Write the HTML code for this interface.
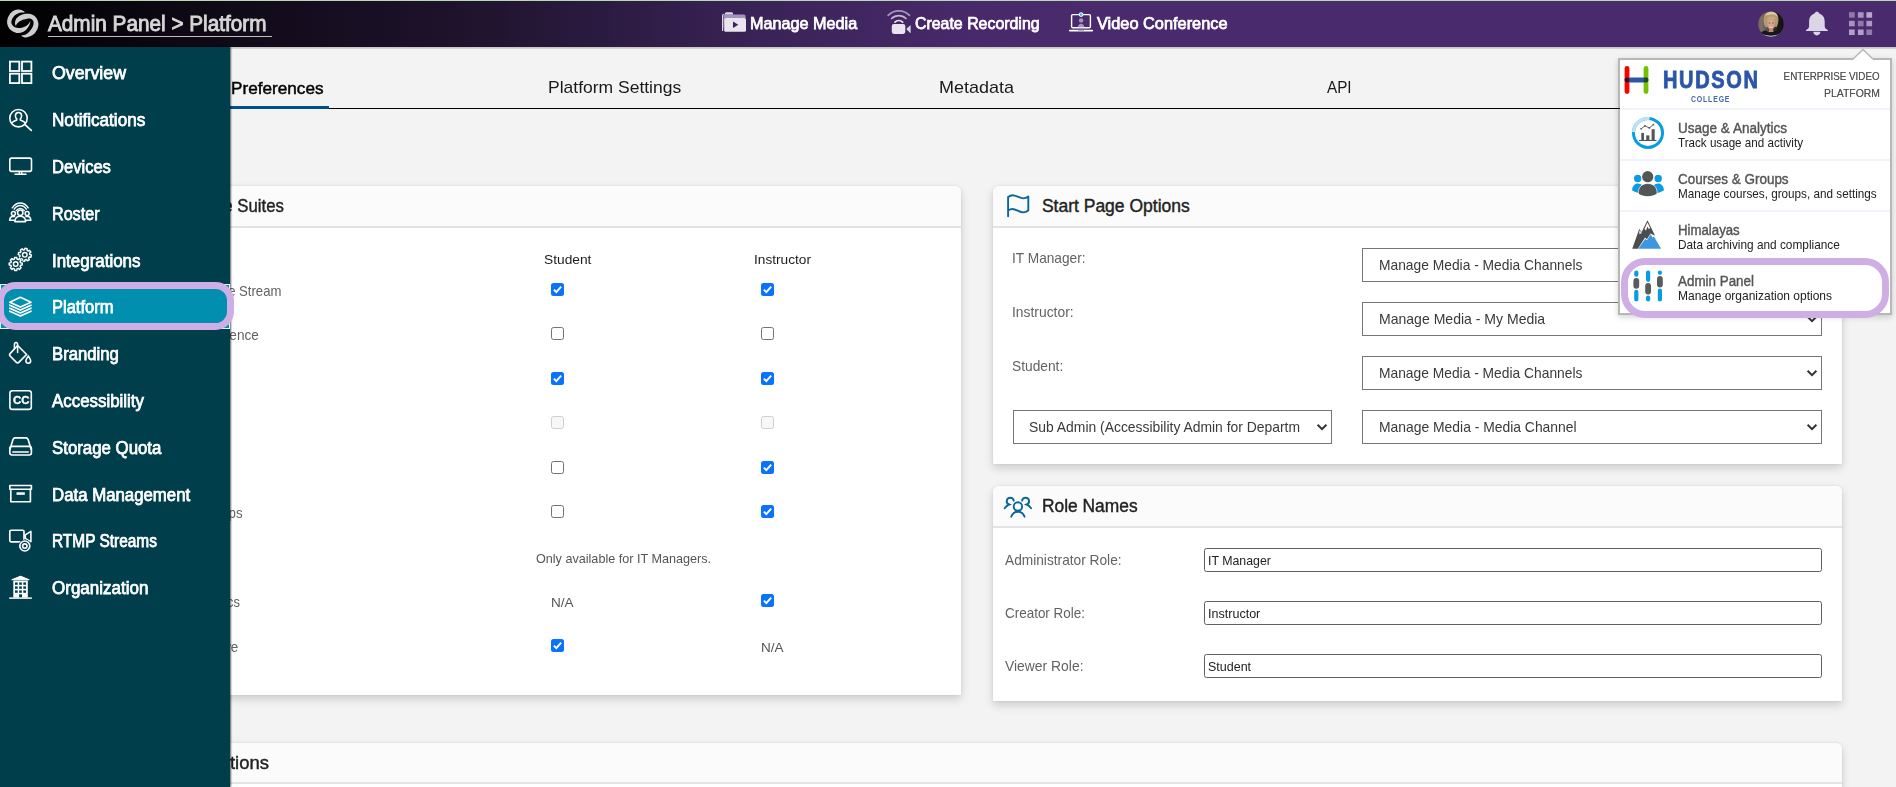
<!DOCTYPE html>
<html lang="en"><head><meta charset="utf-8"><title>Admin Panel - Platform</title>
<style>
*{box-sizing:border-box;margin:0;padding:0}
html,body{width:1896px;height:787px;overflow:hidden;background:#f3f3f3;font-family:"Liberation Sans",sans-serif}
body{position:relative}
.abs{position:absolute}
.t{position:absolute;white-space:pre;line-height:1;font-family:"Liberation Sans",sans-serif}
#topline{left:0;top:0;width:1896px;height:1px;background:#b9d8b4}
#hdr{left:0;top:1px;width:1896px;height:46px;background:linear-gradient(90deg,#000 0,#0a060f 130px,#1f132d 470px,#3a2357 760px,#482a6b 980px,#492b6d 1100px)}
#side{left:0;top:47px;width:230px;height:740px;background:#003e4c;box-shadow:1px 0 1.6px rgba(0,0,0,.6)}
.card{position:absolute;background:#fff;border-radius:6px 6px 1px 1px;box-shadow:0 4px 10px rgba(0,0,0,.16),0 0 3px rgba(0,0,0,.08)}
.card .hd{position:absolute;left:0;top:0;right:0;height:42px;background:#fbfbfb;border-bottom:2px solid #e3e3e3;border-radius:6px 6px 0 0}
.sel{position:absolute;height:34px;background:#fff;border:1px solid #767676;border-radius:0}
.inp{position:absolute;height:24px;background:#fff;border:1px solid #606060;border-radius:2.5px}
.cb{position:absolute;width:13px;height:13px;border-radius:2.5px}
.cb.on{background:#0a72fb}
.cb.off{background:#fff;border:1px solid #727272}
.cb.dis{background:#f7f7f7;border:1px solid #cfcfcf}
.cb svg{position:absolute;left:0;top:0}

</style></head>
<body>
<span class="t" style="left:230.80px;top:79.60px;font-size:17px;font-weight:400;color:#000;transform:scaleX(1.0101);transform-origin:left center;-webkit-text-stroke:.45px #000;">Preferences</span>
<span class="t" style="left:548.00px;top:79.40px;font-size:17px;font-weight:400;color:#1a1a1a;transform:scaleX(1.0289);transform-origin:left center;">Platform Settings</span>
<span class="t" style="left:939.30px;top:79.40px;font-size:17px;font-weight:400;color:#1a1a1a;transform:scaleX(1.0580);transform-origin:left center;">Metadata</span>
<span class="t" style="left:1326.60px;top:79.40px;font-size:17px;font-weight:400;color:#1a1a1a;transform:scaleX(0.8976);transform-origin:left center;">API</span>
<div class="abs" style="left:329px;top:108px;width:1300px;height:1px;background:#000"></div>
<div class="abs" style="left:200px;top:106px;width:129px;height:3px;background:#00518a"></div>
<div class="card" style="left:150px;top:186px;width:811px;height:509px"><div class="hd"></div></div>
<span class="t" style="left:169.69px;top:198.25px;font-size:17.5px;font-weight:400;color:#222;transform:scaleX(0.9560);transform-origin:right center;-webkit-text-stroke:.4px #222;">Feature Suites</span>
<span class="t" style="left:543.60px;top:253.31px;font-size:13.5px;font-weight:400;color:#1c1c1c;transform:scaleX(1.0183);transform-origin:left center;">Student</span>
<span class="t" style="left:754.00px;top:253.31px;font-size:13.5px;font-weight:400;color:#1c1c1c;transform:scaleX(1.0128);transform-origin:left center;">Instructor</span>
<span class="t" style="left:203.93px;top:284.12px;font-size:14.5px;font-weight:400;color:#636363;transform:scaleX(0.9048);transform-origin:right center;">Live Stream</span>
<span class="t" style="left:143.47px;top:328.42px;font-size:14.5px;font-weight:400;color:#636363;transform:scaleX(0.9379);transform-origin:right center;">Video Conference</span>
<span class="t" style="left:194.74px;top:506.42px;font-size:14.5px;font-weight:400;color:#636363;transform:scaleX(0.9134);transform-origin:right center;">Groups</span>
<span class="t" style="left:182.27px;top:595.42px;font-size:14.5px;font-weight:400;color:#636363;transform:scaleX(0.8966);transform-origin:right center;">Analytics</span>
<span class="t" style="left:189.64px;top:640.12px;font-size:14.5px;font-weight:400;color:#636363;transform:scaleX(0.9284);transform-origin:right center;">Archive</span>
<div class="cb on" style="left:551px;top:283px"><svg width="13" height="13" viewBox="0 0 13 13"><path d="M2.9 6.7 5.3 9.2 10.2 3.6" fill="none" stroke="#fff" stroke-width="1.9" stroke-linecap="butt" stroke-linejoin="miter"/></svg></div>
<div class="cb on" style="left:761px;top:283px"><svg width="13" height="13" viewBox="0 0 13 13"><path d="M2.9 6.7 5.3 9.2 10.2 3.6" fill="none" stroke="#fff" stroke-width="1.9" stroke-linecap="butt" stroke-linejoin="miter"/></svg></div>
<div class="cb off" style="left:551px;top:327px"></div>
<div class="cb off" style="left:761px;top:327px"></div>
<div class="cb on" style="left:551px;top:372px"><svg width="13" height="13" viewBox="0 0 13 13"><path d="M2.9 6.7 5.3 9.2 10.2 3.6" fill="none" stroke="#fff" stroke-width="1.9" stroke-linecap="butt" stroke-linejoin="miter"/></svg></div>
<div class="cb on" style="left:761px;top:372px"><svg width="13" height="13" viewBox="0 0 13 13"><path d="M2.9 6.7 5.3 9.2 10.2 3.6" fill="none" stroke="#fff" stroke-width="1.9" stroke-linecap="butt" stroke-linejoin="miter"/></svg></div>
<div class="cb dis" style="left:551px;top:416px"></div>
<div class="cb dis" style="left:761px;top:416px"></div>
<div class="cb off" style="left:551px;top:461px"></div>
<div class="cb on" style="left:761px;top:461px"><svg width="13" height="13" viewBox="0 0 13 13"><path d="M2.9 6.7 5.3 9.2 10.2 3.6" fill="none" stroke="#fff" stroke-width="1.9" stroke-linecap="butt" stroke-linejoin="miter"/></svg></div>
<div class="cb off" style="left:551px;top:505px"></div>
<div class="cb on" style="left:761px;top:505px"><svg width="13" height="13" viewBox="0 0 13 13"><path d="M2.9 6.7 5.3 9.2 10.2 3.6" fill="none" stroke="#fff" stroke-width="1.9" stroke-linecap="butt" stroke-linejoin="miter"/></svg></div>
<span class="t" style="left:535.70px;top:552.25px;font-size:13px;font-weight:400;color:#555;transform:scaleX(0.9700);transform-origin:left center;">Only available for IT Managers.</span>
<span class="t" style="left:551.00px;top:596.25px;font-size:13px;font-weight:400;color:#555;transform:scaleX(1.0428);transform-origin:left center;">N/A</span>
<div class="cb on" style="left:761px;top:594px"><svg width="13" height="13" viewBox="0 0 13 13"><path d="M2.9 6.7 5.3 9.2 10.2 3.6" fill="none" stroke="#fff" stroke-width="1.9" stroke-linecap="butt" stroke-linejoin="miter"/></svg></div>
<div class="cb on" style="left:551px;top:639px"><svg width="13" height="13" viewBox="0 0 13 13"><path d="M2.9 6.7 5.3 9.2 10.2 3.6" fill="none" stroke="#fff" stroke-width="1.9" stroke-linecap="butt" stroke-linejoin="miter"/></svg></div>
<span class="t" style="left:761.00px;top:641.05px;font-size:13px;font-weight:400;color:#555;transform:scaleX(1.0428);transform-origin:left center;">N/A</span>
<div class="card" style="left:150px;top:743px;width:1692px;height:120px"><div class="hd" style="height:41px"></div></div>
<span class="t" style="left:124.35px;top:755.25px;font-size:17.5px;font-weight:400;color:#222;transform:scaleX(1.0549);transform-origin:right center;-webkit-text-stroke:.4px #222;">Recording Options</span>
<div class="card" style="left:993px;top:186px;width:849px;height:278px"><div class="hd"></div></div>
<svg class="abs" style="left:1000px;top:190px" width="36" height="32" viewBox="1000 190 36 32"><path d="M1008.100 216.300V196.900c1.500-1.100 2.900-1.700 4.400-1.700 3.600 0 7 3.200 11 3.200 1.800 0 3.300-.7 4.800-1.900v14c-1.500 1.200-3 1.900-4.800 1.900-4 0-7.400-3.400-11-3.400-1.500 0-2.900.5-4.400 1.500" fill="none" stroke="#0b6795" stroke-width="1.900" stroke-linecap="round" stroke-linejoin="round"/></svg>
<span class="t" style="left:1041.90px;top:198.25px;font-size:17.5px;font-weight:400;color:#222;-webkit-text-stroke:.4px #222;">Start Page Options</span>
<span class="t" style="left:1012.00px;top:251.22px;font-size:14.5px;font-weight:400;color:#636363;transform:scaleX(0.9445);transform-origin:left center;">IT Manager:</span>
<span class="t" style="left:1012.00px;top:304.82px;font-size:14.5px;font-weight:400;color:#636363;transform:scaleX(0.9555);transform-origin:left center;">Instructor:</span>
<span class="t" style="left:1012.00px;top:358.62px;font-size:14.5px;font-weight:400;color:#636363;transform:scaleX(0.9479);transform-origin:left center;">Student:</span>
<div class="sel" style="left:1362px;top:248px;width:460px"><svg class="abs" style="right:3px;top:10px" width="12" height="12" viewBox="0 0 12 12"><path d="M1.6 3.7 6 8.1 10.4 3.7" fill="none" stroke="#333" stroke-width="2"/></svg></div>
<div class="sel" style="left:1362px;top:302px;width:460px"><svg class="abs" style="right:3px;top:10px" width="12" height="12" viewBox="0 0 12 12"><path d="M1.6 3.7 6 8.1 10.4 3.7" fill="none" stroke="#333" stroke-width="2"/></svg></div>
<div class="sel" style="left:1362px;top:356px;width:460px"><svg class="abs" style="right:3px;top:10px" width="12" height="12" viewBox="0 0 12 12"><path d="M1.6 3.7 6 8.1 10.4 3.7" fill="none" stroke="#333" stroke-width="2"/></svg></div>
<div class="sel" style="left:1362px;top:410px;width:460px"><svg class="abs" style="right:3px;top:10px" width="12" height="12" viewBox="0 0 12 12"><path d="M1.6 3.7 6 8.1 10.4 3.7" fill="none" stroke="#333" stroke-width="2"/></svg></div>
<div class="sel" style="left:1013px;top:410px;width:319px"><svg class="abs" style="right:3px;top:10px" width="12" height="12" viewBox="0 0 12 12"><path d="M1.6 3.7 6 8.1 10.4 3.7" fill="none" stroke="#333" stroke-width="2"/></svg></div>
<span class="t" style="left:1379.00px;top:258.12px;font-size:14.5px;font-weight:400;color:#3a3a3a;transform:scaleX(0.9523);transform-origin:left center;">Manage Media - Media Channels</span>
<span class="t" style="left:1379.00px;top:312.12px;font-size:14.5px;font-weight:400;color:#3a3a3a;transform:scaleX(0.9681);transform-origin:left center;">Manage Media - My Media</span>
<span class="t" style="left:1379.00px;top:366.12px;font-size:14.5px;font-weight:400;color:#3a3a3a;transform:scaleX(0.9523);transform-origin:left center;">Manage Media - Media Channels</span>
<span class="t" style="left:1379.00px;top:420.12px;font-size:14.5px;font-weight:400;color:#3a3a3a;transform:scaleX(0.9576);transform-origin:left center;">Manage Media - Media Channel</span>
<span class="t" style="left:1029.40px;top:420.12px;font-size:14.5px;font-weight:400;color:#3a3a3a;transform:scaleX(0.9581);transform-origin:left center;">Sub Admin (Accessibility Admin for Departm</span>
<div class="card" style="left:993px;top:486px;width:849px;height:215px"><div class="hd"></div></div>
<svg class="abs" style="left:1000px;top:492px" width="36" height="30" viewBox="1000 492 36 30"><g fill="none" stroke="#0b6795" stroke-width="1.900" stroke-linecap="round"><circle cx="1017.900" cy="506.500" r="4.200"/><path d="M1011.200 516.700c1.200-3.400 3.500-5 6.700-5s5.500 1.600 6.700 5"/><path d="M1013.700 500.700a3.500 3.500 0 1 0-4.600 3.800c-1.700.6-3.100 1.900-4.400 3.800"/><path d="M1022.100 500.700a3.500 3.500 0 1 1 4.600 3.800c1.700.6 3.100 1.900 4.400 3.800"/></g></svg>
<span class="t" style="left:1041.90px;top:498.25px;font-size:17.5px;font-weight:400;color:#222;transform:scaleX(0.9928);transform-origin:left center;-webkit-text-stroke:.4px #222;">Role Names</span>
<span class="t" style="left:1005.20px;top:552.62px;font-size:14.5px;font-weight:400;color:#636363;transform:scaleX(0.9457);transform-origin:left center;">Administrator Role:</span>
<span class="t" style="left:1005.20px;top:605.62px;font-size:14.5px;font-weight:400;color:#636363;transform:scaleX(0.9277);transform-origin:left center;">Creator Role:</span>
<span class="t" style="left:1005.20px;top:658.62px;font-size:14.5px;font-weight:400;color:#636363;transform:scaleX(0.9579);transform-origin:left center;">Viewer Role:</span>
<div class="inp" style="left:1204px;top:548px;width:618px"></div>
<div class="inp" style="left:1204px;top:601px;width:618px"></div>
<div class="inp" style="left:1204px;top:654px;width:618px"></div>
<span class="t" style="left:1208.40px;top:553.85px;font-size:13px;font-weight:400;color:#222;transform:scaleX(0.9494);transform-origin:left center;">IT Manager</span>
<span class="t" style="left:1208.40px;top:606.85px;font-size:13px;font-weight:400;color:#222;transform:scaleX(0.9652);transform-origin:left center;">Instructor</span>
<span class="t" style="left:1208.40px;top:659.85px;font-size:13px;font-weight:400;color:#222;transform:scaleX(0.9614);transform-origin:left center;">Student</span>
<div id="hdr" class="abs"></div>
<div id="topline" class="abs"></div>
<div class="abs" style="left:230px;top:47px;width:1666px;height:2px;background:linear-gradient(#c4c4c0,#d6d6d3)"></div>
<svg class="abs" style="left:0;top:0" width="48" height="47" viewBox="0 0 48 47"><path d="M24.86 12.22C24.81 11.80 22.58 10.55 21.51 10.10C20.44 9.65 19.69 9.50 18.44 9.54C17.18 9.59 15.36 9.68 13.97 10.38C12.57 11.08 11.13 12.34 10.06 13.73C8.99 15.13 8.03 17.13 7.54 18.76C7.06 20.39 6.92 21.97 7.15 23.51C7.38 25.04 7.99 26.66 8.94 27.98C9.89 29.30 11.36 30.60 12.85 31.44C14.34 32.28 16.20 32.91 17.88 33.01C19.55 33.10 21.42 32.68 22.91 32.00C24.39 31.32 25.73 30.11 26.82 28.93C27.91 27.74 28.85 26.20 29.44 24.91C30.03 23.61 30.54 21.26 30.34 21.16C30.13 21.07 29.17 23.40 28.21 24.35C27.25 25.30 25.84 26.25 24.58 26.86C23.32 27.47 21.97 27.88 20.67 28.03C19.37 28.19 17.97 28.13 16.76 27.81C15.55 27.49 14.29 26.88 13.41 26.13C12.52 25.39 11.73 24.38 11.45 23.34C11.17 22.30 11.31 21.06 11.73 19.88C12.15 18.69 12.94 17.29 13.97 16.25C14.99 15.20 16.57 14.23 17.88 13.62C19.18 13.01 20.62 12.85 21.79 12.61C22.95 12.38 24.91 12.64 24.86 12.22Z" fill="#cecece"/><path d="M15.81 25.74C15.51 25.51 14.91 23.83 14.97 22.67C15.04 21.51 15.44 19.92 16.20 18.76C16.96 17.60 18.25 16.48 19.55 15.69C20.86 14.90 22.44 14.32 24.02 14.01C25.61 13.70 27.47 13.64 29.05 13.84C30.63 14.05 32.22 14.42 33.52 15.24C34.82 16.06 36.05 17.34 36.87 18.76C37.69 20.18 38.32 22.11 38.44 23.79C38.55 25.46 38.16 27.23 37.54 28.82C36.93 30.40 35.98 32.03 34.75 33.28C33.52 34.54 31.58 35.64 30.17 36.36C28.75 37.07 27.37 37.47 26.26 37.59C25.14 37.70 24.27 37.37 23.46 37.03C22.65 36.68 21.12 35.91 21.40 35.52C21.68 35.13 23.91 35.24 25.14 34.68C26.37 34.12 27.70 33.15 28.77 32.17C29.84 31.19 30.80 30.03 31.56 28.82C32.33 27.61 33.05 26.16 33.35 24.91C33.65 23.65 33.70 22.25 33.35 21.27C33.01 20.30 32.28 19.48 31.28 19.04C30.29 18.60 28.77 18.53 27.37 18.65C25.98 18.77 24.30 19.23 22.91 19.77C21.51 20.30 20.02 21.12 18.99 21.83C17.97 22.55 17.29 23.42 16.76 24.07C16.23 24.72 16.11 25.98 15.81 25.74Z" fill="#cecece"/></svg>
<span class="t" style="left:47.80px;top:13.80px;font-size:21.5px;font-weight:400;color:#d6d6d6;transform:scaleX(0.9648);transform-origin:left center;-webkit-text-stroke:.9px #d6d6d6;">Admin Panel &gt; Platform</span>
<div class="abs" style="left:48px;top:36px;width:224px;height:1px;background:#bdbdbd"></div>
<span class="t" style="left:749.90px;top:15.34px;font-size:16.5px;font-weight:400;color:#fff;transform:scaleX(0.9821);transform-origin:left center;-webkit-text-stroke:.75px #fff;">Manage Media</span>
<span class="t" style="left:915.00px;top:15.34px;font-size:16.5px;font-weight:400;color:#fff;transform:scaleX(0.9634);transform-origin:left center;-webkit-text-stroke:.75px #fff;">Create Recording</span>
<span class="t" style="left:1096.60px;top:15.34px;font-size:16.5px;font-weight:400;color:#fff;transform:scaleX(0.9902);transform-origin:left center;-webkit-text-stroke:.75px #fff;">Video Conference</span>
<svg class="abs" style="left:716px;top:6px" width="36" height="32" viewBox="716 6 36 32"><path d="M722.600 31V15.600c0-.9.500-1.400 1.300-1.400" fill="none" stroke="#e4deeb" stroke-width="1.100"/><path d="M723.500 30.500V15.500c0-.7.400-1.100 1.100-1.100h19.200c.8 0 1.300.4 1.500 1.100l.6 2.500H725z" fill="#a493bc"/><path d="M724.700 14.400c0-1.400.6-2.200 1.800-2.200h5.200c.9 0 1.400.8 1.400 2.200z" fill="#e0d9e8"/><rect x="724.200" y="18" width="21.800" height="13.800" rx="1.600" fill="#e9e4ee"/><path d="M733 21.600v6.300l5.300-3.150z" fill="#3b2259"/></svg>
<svg class="abs" style="left:884px;top:6px" width="32" height="32" viewBox="884 6 32 32"><g fill="none" stroke-linecap="round"><path d="M888.100 15.300C894 9.300 903.600 9.300 909.500 15.300" stroke="#a695be" stroke-width="1.700"/><path d="M891.600 18.500c4-3.900 10.400-3.900 14.400 0" stroke="#c3b6d5" stroke-width="1.700"/><path d="M895 22.100c2.200-2 5.400-2 7.600 0" stroke="#ece7f1" stroke-width="1.800"/></g><rect x="891.800" y="24" width="13.500" height="9.900" rx="2.100" fill="#e9e4ee"/><path d="M906.300 29.100 910.200 25.200c.2-.2.400-.1.400.2v7.400c0 .3-.2.400-.4.200z" fill="#ddd5e6"/></svg>
<svg class="abs" style="left:1064px;top:8px" width="34" height="28" viewBox="1064 8 34 28"><rect x="1071.600" y="14.600" width="18.800" height="13.200" rx="1.200" fill="none" stroke="#fff" stroke-width="1.400"/><rect x="1068.900" y="29.700" width="24.200" height="1.800" rx=".9" fill="#fff"/><rect x="1078" y="29.700" width="6" height=".8" fill="#7c6a97"/><circle cx="1081.100" cy="20.400" r="2.200" fill="#a797bc"/><path d="M1077.800 27.200c.3-2.300 1.500-3.500 3.300-3.500s3 1.200 3.300 3.500z" fill="#a797bc"/><circle cx="1081.100" cy="14.600" r="2.300" fill="#fff"/><circle cx="1081.100" cy="14.600" r="1.400" fill="#45b4ff"/></svg>
<svg class="abs" style="left:1756px;top:9px" width="30" height="30" viewBox="1756 9 30 30"><defs><clipPath id="av"><circle cx="1770.900" cy="24" r="12.700"/></clipPath><filter id="avbl" x="-10%" y="-10%" width="120%" height="120%"><feGaussianBlur stdDeviation=".55"/></filter><linearGradient id="avb" x1="0" x2="1"><stop offset="0" stop-color="#5d5550"/><stop offset=".22" stop-color="#7d7167"/><stop offset=".4" stop-color="#5a4e48"/><stop offset=".72" stop-color="#1a1615"/><stop offset="1" stop-color="#0b0909"/></linearGradient><radialGradient id="avf" cx=".5" cy=".42" r=".62"><stop offset="0" stop-color="#e0b69e"/><stop offset=".7" stop-color="#cc9a82"/><stop offset="1" stop-color="#9c6e5a"/></radialGradient></defs><g clip-path="url(#av)"><g filter="url(#avbl)"><rect x="1754" y="7" width="34" height="34" fill="url(#avb)"/><path d="M1763.800 22.500c-1.200-6 1.800-10.600 6.800-10.900 5.200-.3 8.500 3.600 7.800 9.400-.3 2.300-.8 4-1.600 5.800l-11.300.400c-.9-1.600-1.400-3-1.700-4.700z" fill="#b39a72"/><path d="M1764.600 16c1.800-3.200 4.600-4.500 7.400-4.200 2.700.3 4.800 1.900 5.600 4.600-1.900-1.400-3.700-1.900-6-1.800-2.600.1-4.800.5-7 1.400z" fill="#dcc9a2"/><ellipse cx="1771.100" cy="23.800" rx="4.400" ry="5.900" fill="url(#avf)"/><path d="M1766.300 21c.6-3.200 2.600-4.800 5-4.800 2.500 0 4.300 1.500 4.800 4.300-1.500-1.500-3-2-4.800-2-1.900 0-3.400.8-5 2.500z" fill="#c4aa7c"/><path d="M1768.900 23h1.500M1772 23h1.500" stroke="#4e382f" stroke-width=".8"/><path d="M1769.300 26.800c1 .8 2.600.8 3.600 0" stroke="#f3e6df" stroke-width=".9" fill="none"/><path d="M1769.300 29h3.600l.6 3h-4.800z" fill="#b98a74"/><path d="M1758 39c.5-5.500 3.800-7.800 8-8.500l2.500 1.800h4.800l2.500-1.800c4.200.7 7.500 3 8 8.500z" fill="#15151a"/><path d="M1760 33.800c3.200 1.700 6.800 2.500 10.900 2.500s7.700-.8 10.900-2.500" stroke="#c9ccd3" stroke-width="1.200" fill="none"/><path d="M1761 36.200c3 1.300 6.300 1.900 9.900 1.900s6.900-.6 9.900-1.900" stroke="#8f939c" stroke-width="1" fill="none"/></g></g></svg>
<svg class="abs" style="left:1800px;top:5px" width="34" height="40" viewBox="1800 5 34 40"><path d="M1816.900 11.800c1.200 0 2 .6 2.300 1.600 3.600 1 5.500 4.100 5.500 8.200v4.300c0 1.500.5 2.300 1.600 3.100l1.300.9c.5.400.4 1-.3 1h-20.800c-.7 0-.8-.6-.3-1l1.300-.9c1.100-.8 1.600-1.600 1.600-3.100v-4.300c0-4.100 1.900-7.200 5.500-8.200.3-1 1.100-1.600 2.300-1.600z" fill="#dcd5e6"/><path d="M1813.300 31.800h7.100c0 2.100-1.500 3.600-3.550 3.600s-3.550-1.500-3.550-3.600z" fill="#dcd5e6"/></svg>
<svg class="abs" style="left:1840px;top:5px" width="40" height="40" viewBox="1840 5 40 40"><rect x="1849.0" y="12.2" width="5.700" height="5.500" fill="#8f79ab"/><rect x="1857.9" y="12.2" width="5.700" height="5.500" fill="#a994c1"/><rect x="1866.4" y="12.2" width="5.700" height="5.500" fill="#b7a7cc"/><rect x="1849.0" y="20.8" width="5.700" height="5.500" fill="#a893c0"/><rect x="1857.9" y="20.8" width="5.700" height="5.500" fill="#8f79ab"/><rect x="1866.4" y="20.8" width="5.700" height="5.500" fill="#ab97c3"/><rect x="1849.0" y="29.5" width="5.700" height="5.500" fill="#b2a1c8"/><rect x="1857.9" y="29.5" width="5.700" height="5.500" fill="#b2a1c8"/><rect x="1866.4" y="29.5" width="5.700" height="5.500" fill="#917bad"/></svg>
<div id="side" class="abs"></div>
<div class="abs" style="left:0;top:284px;width:230px;height:45px;background:#008fae;border:1px solid #e8f4f7"></div>
<div class="abs" style="left:-3px;top:282px;width:237px;height:48px;border:7px solid #cfaee5;border-radius:18.5px;background:transparent"></div>
<span class="t" style="left:51.90px;top:65.45px;font-size:17.5px;font-weight:400;color:#fff;transform:scaleX(1.0146);transform-origin:left center;-webkit-text-stroke:.75px #fff;">Overview</span>
<span class="t" style="left:51.90px;top:112.25px;font-size:17.5px;font-weight:400;color:#fff;transform:scaleX(0.9787);transform-origin:left center;-webkit-text-stroke:.75px #fff;">Notifications</span>
<span class="t" style="left:51.90px;top:159.05px;font-size:17.5px;font-weight:400;color:#fff;transform:scaleX(0.9462);transform-origin:left center;-webkit-text-stroke:.75px #fff;">Devices</span>
<span class="t" style="left:51.90px;top:205.85px;font-size:17.5px;font-weight:400;color:#fff;transform:scaleX(0.9215);transform-origin:left center;-webkit-text-stroke:.75px #fff;">Roster</span>
<span class="t" style="left:51.90px;top:252.65px;font-size:17.5px;font-weight:400;color:#fff;transform:scaleX(0.9677);transform-origin:left center;-webkit-text-stroke:.75px #fff;">Integrations</span>
<span class="t" style="left:51.90px;top:299.45px;font-size:17.5px;font-weight:400;color:#fff;transform:scaleX(0.9424);transform-origin:left center;-webkit-text-stroke:.75px #fff;">Platform</span>
<span class="t" style="left:51.90px;top:346.25px;font-size:17.5px;font-weight:400;color:#fff;transform:scaleX(0.9549);transform-origin:left center;-webkit-text-stroke:.75px #fff;">Branding</span>
<span class="t" style="left:51.90px;top:393.05px;font-size:17.5px;font-weight:400;color:#fff;transform:scaleX(0.9642);transform-origin:left center;-webkit-text-stroke:.75px #fff;">Accessibility</span>
<span class="t" style="left:51.90px;top:439.85px;font-size:17.5px;font-weight:400;color:#fff;transform:scaleX(0.9611);transform-origin:left center;-webkit-text-stroke:.75px #fff;">Storage Quota</span>
<span class="t" style="left:51.90px;top:486.65px;font-size:17.5px;font-weight:400;color:#fff;transform:scaleX(0.9598);transform-origin:left center;-webkit-text-stroke:.75px #fff;">Data Management</span>
<span class="t" style="left:51.90px;top:533.45px;font-size:17.5px;font-weight:400;color:#fff;transform:scaleX(0.8817);transform-origin:left center;-webkit-text-stroke:.75px #fff;">RTMP Streams</span>
<span class="t" style="left:51.90px;top:580.25px;font-size:17.5px;font-weight:400;color:#fff;transform:scaleX(0.9714);transform-origin:left center;-webkit-text-stroke:.75px #fff;">Organization</span>
<svg class="abs" style="left:0;top:47px" width="48" height="600" viewBox="0 47 48 600"><rect x="9.9" y="61.6" width="9.400" height="9.400" stroke="#fff" fill="none" stroke-width="1.8"/><rect x="22.0" y="61.6" width="9.400" height="9.400" stroke="#fff" fill="none" stroke-width="1.8"/><rect x="9.9" y="73.7" width="9.400" height="9.400" stroke="#fff" fill="none" stroke-width="1.8"/><rect x="22.0" y="73.7" width="9.400" height="9.400" stroke="#fff" fill="none" stroke-width="1.8"/><circle cx="18.500" cy="118.200" r="8.700" stroke="#fff" fill="none" stroke-linejoin="round" stroke-linecap="round" stroke-width="1.6"/><path d="M25 124.700 31.300 130.400" stroke="#fff" fill="none" stroke-linejoin="round" stroke-linecap="round" stroke-width="1.7"/><path d="M18.500 112.400c1.900 0 3.100 1.400 3.100 3.300 0 1.300-.5 2.400-1.300 3.100v1.200l3.300 1.500c.5.200.8.600.9 1.100M18.500 112.400c-1.900 0-3.100 1.400-3.100 3.300 0 1.300.5 2.400 1.300 3.100v1.200l-3.300 1.500c-.5.200-.8.600-.9 1.100" stroke="#fff" fill="none" stroke-linejoin="round" stroke-linecap="round" stroke-width="1.55"/><rect x="9.800" y="158.100" width="21.700" height="13.300" rx="1.800" stroke="#fff" fill="none" stroke-linejoin="round" stroke-linecap="round" stroke-width="1.6"/><path d="M15 174.200h11" stroke="#fff" fill="none" stroke-linejoin="round" stroke-linecap="round" stroke-width="1.55"/><path d="M19.300 172v2M21.700 172v2" stroke="#fff" fill="none" stroke-linejoin="round" stroke-linecap="round" stroke-width="1.35"/><path d="M12.300 207.800C16.500 201.300 24 201.300 28.200 207.800" stroke="#fff" fill="none" stroke-linejoin="round" stroke-linecap="round" stroke-width="1.45"/><path d="M14.200 209.200c3.200-4.800 8.900-4.800 12.100 0" stroke="#fff" fill="none" stroke-linejoin="round" stroke-linecap="round" stroke-width="1.45"/><path d="M16.200 210.600c2.200-3 5.900-3 8.100 0" stroke="#fff" fill="none" stroke-linejoin="round" stroke-linecap="round" stroke-width="1.45"/><circle cx="20.250" cy="212.700" r="2.700" stroke="#fff" fill="none" stroke-linejoin="round" stroke-linecap="round" stroke-width="1.55"/><path d="M14.800 221.600c.3-3.600 2.300-5.300 5.450-5.300s5.150 1.700 5.450 5.300z" stroke="#fff" fill="none" stroke-linejoin="round" stroke-linecap="round" stroke-width="1.55"/><circle cx="13.400" cy="213.400" r="2" stroke="#fff" fill="none" stroke-linejoin="round" stroke-linecap="round" stroke-width="1.45"/><circle cx="27.100" cy="213.400" r="2" stroke="#fff" fill="none" stroke-linejoin="round" stroke-linecap="round" stroke-width="1.45"/><path d="M9.600 220.200c.2-2.600 1.500-3.900 3.800-4l1.200.4M30.900 220.200c-.2-2.600-1.500-3.900-3.800-4l-1.200.4M9.600 220.200h4.500M30.900 220.200h-4.500" stroke="#fff" fill="none" stroke-linejoin="round" stroke-linecap="round" stroke-width="1.45"/><path d="M29.79 254.50L31.40 255.00L30.95 257.19L29.28 257.02L28.54 258.12L29.32 259.60L27.46 260.84L26.40 259.54L25.10 259.79L24.60 261.40L22.41 260.95L22.58 259.28L21.48 258.54L20.00 259.32L18.76 257.46L20.06 256.40L19.81 255.10L18.20 254.60L18.65 252.41L20.32 252.58L21.06 251.48L20.28 250.00L22.14 248.76L23.20 250.06L24.50 249.81L25.00 248.20L27.19 248.65L27.02 250.32L28.12 251.06L29.60 250.28L30.84 252.14L29.54 253.20Z" stroke="#fff" fill="none" stroke-linejoin="round" stroke-linecap="round" stroke-width="1.45"/><circle cx="24.8" cy="254.8" r="2.3" stroke="#fff" fill="none" stroke-linejoin="round" stroke-linecap="round" stroke-width="1.45"/><circle cx="15.700" cy="264" r="7.600" fill="#003e4c"/><path d="M20.53 262.71L22.20 262.88L22.20 265.12L20.53 265.29L20.03 266.51L21.09 267.81L19.51 269.39L18.21 268.33L16.99 268.83L16.82 270.50L14.58 270.50L14.41 268.83L13.19 268.33L11.89 269.39L10.31 267.81L11.37 266.51L10.87 265.29L9.20 265.12L9.20 262.88L10.87 262.71L11.37 261.49L10.31 260.19L11.89 258.61L13.19 259.67L14.41 259.17L14.58 257.50L16.82 257.50L16.99 259.17L18.21 259.67L19.51 258.61L21.09 260.19L20.03 261.49Z" stroke="#fff" fill="none" stroke-linejoin="round" stroke-linecap="round" stroke-width="1.45"/><circle cx="15.7" cy="264.0" r="2.3" stroke="#fff" fill="none" stroke-linejoin="round" stroke-linecap="round" stroke-width="1.45"/><path d="M20.400 297.300 31 302.200 20.400 307.100 9.800 302.200z" stroke="#fff" fill="none" stroke-linejoin="round" stroke-linecap="round" stroke-width="1.65"/><path d="M9.800 305.2 20.400 310.1 31 305.2" stroke="#fff" fill="none" stroke-linejoin="round" stroke-linecap="round" stroke-width="1.65"/><path d="M9.800 308.2 20.400 313.1 31 308.2" stroke="#fff" fill="none" stroke-linejoin="round" stroke-linecap="round" stroke-width="1.65"/><path d="M9.800 311.2 20.400 316.1 31 311.2" stroke="#fff" fill="none" stroke-linejoin="round" stroke-linecap="round" stroke-width="1.65"/><path d="M17.600 345.500 26.600 354.500 18.800 362.300c-.7.700-1.700.7-2.400 0l-6.300-6.300c-.7-.7-.7-1.700 0-2.400z" stroke="#fff" fill="none" stroke-linejoin="round" stroke-linecap="round" stroke-width="1.65"/><path d="M17.600 352.500v-7.800c0-1.400-.7-2.200-1.600-2.200s-1.600.8-1.600 2.200v3.800" stroke="#fff" fill="none" stroke-linejoin="round" stroke-linecap="round" stroke-width="1.55"/><path d="M28.300 355.800c1.500 2.300 2.400 3.800 2.400 5a2.400 2.400 0 0 1-4.800 0c0-1.200.9-2.700 2.400-5z" stroke="#fff" fill="none" stroke-linejoin="round" stroke-linecap="round" stroke-width="1.55"/><rect x="9.900" y="390.700" width="21.400" height="18.700" rx="2.500" stroke="#fff" fill="none" stroke-linejoin="round" stroke-linecap="round" stroke-width="1.6"/><path d="M9.900 449.500 13 439.500c.4-1 1.100-1.600 2.200-1.600h10.700c1.100 0 1.800.6 2.200 1.600l3.100 10" stroke="#fff" fill="none" stroke-linejoin="round" stroke-linecap="round" stroke-width="1.65"/><rect x="9.800" y="446.400" width="21.600" height="8.600" rx="2.200" stroke="#fff" fill="none" stroke-linejoin="round" stroke-linecap="round" stroke-width="1.65"/><path d="M12.800 452h15.500" stroke="#fff" fill="none" stroke-linejoin="round" stroke-linecap="round" stroke-width="1.55"/><rect x="9.800" y="485.500" width="21.600" height="3.700" stroke="#fff" fill="none" stroke-linejoin="round" stroke-linecap="round" stroke-width="1.65"/><path d="M10.800 489.200V501.700H30.400V489.200" stroke="#fff" fill="none" stroke-linejoin="round" stroke-linecap="round" stroke-width="1.65"/><rect x="16.500" y="492.300" width="8.300" height="2.500" fill="#fff"/><rect x="9.800" y="530.200" width="14.200" height="11.600" rx="1.200" stroke="#fff" fill="none" stroke-linejoin="round" stroke-linecap="round" stroke-width="1.65"/><path d="M25.300 534.800 30.900 531.300V541.800L25.300 538.300z" stroke="#fff" fill="none" stroke-linejoin="round" stroke-linecap="round" stroke-width="1.55"/><circle cx="24.800" cy="546" r="6.400" fill="#003e4c"/><circle cx="24.800" cy="546" r="5" stroke="#fff" fill="none" stroke-linejoin="round" stroke-linecap="round" stroke-width="1.65"/><circle cx="24.800" cy="546" r="2.200" stroke="#fff" fill="none" stroke-linejoin="round" stroke-linecap="round" stroke-width="1.65"/><path d="M12 579.700 20.500 576.200 29 579.700z" fill="#fff" stroke="#fff" stroke-width="1.05" stroke-linejoin="round"/><rect x="13.300" y="580.600" width="14.500" height="17" fill="#fff"/><rect x="15.00" y="582.40" width="2.700" height="2.400" fill="#003e4c"/><rect x="19.15" y="582.40" width="2.700" height="2.400" fill="#003e4c"/><rect x="23.30" y="582.40" width="2.700" height="2.400" fill="#003e4c"/><rect x="15.00" y="586.40" width="2.700" height="2.400" fill="#003e4c"/><rect x="19.15" y="586.40" width="2.700" height="2.400" fill="#003e4c"/><rect x="23.30" y="586.40" width="2.700" height="2.400" fill="#003e4c"/><rect x="15.00" y="590.40" width="2.700" height="2.400" fill="#003e4c"/><rect x="19.15" y="590.40" width="2.700" height="2.400" fill="#003e4c"/><rect x="23.30" y="590.40" width="2.700" height="2.400" fill="#003e4c"/><rect x="19.100" y="594.300" width="2.900" height="3.500" fill="#003e4c"/><path d="M9.200 598.100h22.700" stroke="#fff" stroke-width="1.45"/></svg>
<span class="t" style="left:12.60px;top:395.17px;font-size:10.5px;font-weight:700;color:#fff;transform:scaleX(1.0941);transform-origin:left center;-webkit-text-stroke:.3px #fff;">CC</span>
<div class="abs" style="left:1618px;top:58px;width:274px;height:257px;background:#fff;border:2px solid #b7b7b7;box-shadow:0 2px 6px rgba(0,0,0,.18)"></div>
<svg class="abs" style="left:1851px;top:48px" width="24" height="13" viewBox="0 0 24 13"><path d="M1 12 12 1.500 23 12" fill="#fff" stroke="#b9b9b9" stroke-width="1.600"/><rect x="2.500" y="11.300" width="19" height="2" fill="#fff"/></svg>
<svg class="abs" style="left:1623px;top:65px" width="28" height="30" viewBox="0 0 28 30"><path d="M4 3.500v23" stroke="#f00" stroke-width="4.800" stroke-linecap="round"/><path d="M23 3.500v23" stroke="#76c000" stroke-width="4.800" stroke-linecap="round"/><path d="M4 15h19" stroke="#2c55a6" stroke-width="4.800" stroke-linecap="round"/><circle cx="4" cy="15" r="2.400" fill="#4a0a14"/><circle cx="23" cy="15" r="2.400" fill="#1f4a1c"/></svg>
<span class="t" style="left:1663.00px;top:68.18px;font-size:24px;font-weight:700;color:#2b56a8;letter-spacing:2px;transform:scaleX(0.8332);transform-origin:left center;-webkit-text-stroke:.9px #2b56a8;">HUDSON</span>
<span class="t" style="left:1690.50px;top:95.00px;font-size:8.6px;font-weight:700;color:#4467b3;letter-spacing:1px;transform:scaleX(0.8097);transform-origin:left center;">COLLEGE</span>
<span class="t" style="left:1774.41px;top:70.72px;font-size:10.8px;font-weight:400;color:#555;transform:scaleX(0.9091);transform-origin:right center;text-shadow:0 0 .5px rgba(85,85,85,.8);">ENTERPRISE VIDEO</span>
<span class="t" style="left:1822.00px;top:87.82px;font-size:10.8px;font-weight:400;color:#555;transform:scaleX(0.9655);transform-origin:right center;text-shadow:0 0 .5px rgba(85,85,85,.8);">PLATFORM</span>
<div class="abs" style="left:1620px;top:108px;width:270px;height:2px;background:#f2f2fa"></div>
<div class="abs" style="left:1620px;top:159px;width:270px;height:2px;background:#f2f2fa"></div>
<div class="abs" style="left:1620px;top:210px;width:270px;height:2px;background:#f2f2fa"></div>
<span class="t" style="left:1678.00px;top:121.46px;font-size:14px;font-weight:400;color:#555;transform:scaleX(0.9659);transform-origin:left center;-webkit-text-stroke:.4px #555;">Usage &amp; Analytics</span>
<span class="t" style="left:1678.00px;top:137.24px;font-size:12.4px;font-weight:400;color:#222;transform:scaleX(0.9387);transform-origin:left center;">Track usage and activity</span>
<span class="t" style="left:1678.00px;top:172.46px;font-size:14px;font-weight:400;color:#555;transform:scaleX(0.9603);transform-origin:left center;-webkit-text-stroke:.4px #555;">Courses &amp; Groups</span>
<span class="t" style="left:1678.00px;top:187.74px;font-size:12.4px;font-weight:400;color:#222;transform:scaleX(0.9458);transform-origin:left center;">Manage courses, groups, and settings</span>
<span class="t" style="left:1678.00px;top:223.46px;font-size:14px;font-weight:400;color:#555;transform:scaleX(0.9440);transform-origin:left center;-webkit-text-stroke:.4px #555;">Himalayas</span>
<span class="t" style="left:1678.00px;top:239.44px;font-size:12.4px;font-weight:400;color:#222;transform:scaleX(0.9549);transform-origin:left center;">Data archiving and compliance</span>
<span class="t" style="left:1678.00px;top:274.46px;font-size:14px;font-weight:400;color:#555;transform:scaleX(0.9573);transform-origin:left center;-webkit-text-stroke:.4px #555;">Admin Panel</span>
<span class="t" style="left:1678.00px;top:290.24px;font-size:12.4px;font-weight:400;color:#222;transform:scaleX(0.9678);transform-origin:left center;">Manage organization options</span>
<div class="abs" style="left:1618px;top:108px;width:2px;height:1px;background:#111"></div>
<svg class="abs" style="left:1620px;top:100px" width="60" height="220" viewBox="1620 100 60 220"><circle cx="1648.0" cy="132.9" r="14.5" fill="none" stroke="#0a9be2" stroke-width="3"/><path d="M1633.52 132.14A14.5 14.5 0 0 1 1649.52 118.48" fill="none" stroke="#bfe3f6" stroke-width="3.200"/><rect x="1641.300" y="132.900" width="2.700" height="7.200" fill="#555"/><rect x="1646.200" y="135.400" width="3.200" height="4.700" fill="#555"/><rect x="1651.600" y="129.200" width="3.100" height="10.900" fill="#555"/><path d="M1639 140.500h17.500" stroke="#555" stroke-width="1.100"/><path d="M1641.100 128.800 1644.900 125.900 1649.400 127.900 1653.400 124.600" fill="none" stroke="#555" stroke-width=".9"/><circle cx="1641.1" cy="128.8" r=".9" fill="#555"/><circle cx="1644.9" cy="125.9" r=".9" fill="#555"/><circle cx="1649.4" cy="127.9" r=".9" fill="#555"/><circle cx="1653.4" cy="124.6" r=".9" fill="#555"/><circle cx="1637.700" cy="178.500" r="3.700" fill="#0a9be2"/><circle cx="1658.200" cy="178.500" r="3.700" fill="#0a9be2"/><path d="M1632 190.200c.6-4.300 2.700-6.700 5.800-6.700 1.900 0 3.400.8 4.500 2.200l-3 7.300c-2.600-.300-5.200-1.300-7.300-2.800z" fill="#0a9be2"/><path d="M1664 190.200c-.6-4.300-2.700-6.700-5.800-6.700-1.900 0-3.400.8-4.500 2.200l3 7.300c2.600-.300 5.200-1.300 7.300-2.800z" fill="#0a9be2"/><circle cx="1647.700" cy="176.700" r="6.300" fill="#fff"/><circle cx="1647.700" cy="176.700" r="5.600" fill="#555"/><path d="M1638.300 192.800c0-5.800 3.800-9.300 9.400-9.300s9.400 3.500 9.400 9.300c0 .8-.300 1.400-1 1.800-2.400 1.300-5.300 2-8.400 2s-6-.7-8.400-2c-.7-.4-1-1-1-1.800z" fill="#555" stroke="#fff" stroke-width=".7"/><polygon points="1632.25,248.83 1639.23,229.04 1641.64,231.95 1647.48,220.15 1655.09,235.76 1650.40,233.60 1646.97,239.19 1645.07,237.54 1637.83,248.83" fill="#4d4d4d"/><polygon points="1647.48,222.44 1650.14,228.02 1648.87,229.29 1647.60,226.50 1645.95,230.56 1644.43,229.04" fill="#fff"/><polygon points="1639.48,230.30 1641.77,232.84 1640.88,234.37 1639.99,233.10 1638.85,234.87" fill="#fff" opacity=".85"/><polygon points="1638.21,248.83 1645.32,238.68 1646.97,240.20 1650.65,234.11 1652.43,237.41 1653.95,236.40 1661.06,248.83" fill="#3d97df"/><path d="M1636.3 272.600V274.7M1636.3 291.9V299.500" stroke="#0a9be2" stroke-width="4.200" stroke-linecap="round"/><path d="M1636.3 280.8V285.8" stroke="#5b5b5b" stroke-width="5.800" stroke-linecap="round"/><path d="M1648.1 272.600V279.8M1648.1 297.6V299.500" stroke="#0a9be2" stroke-width="4.200" stroke-linecap="round"/><path d="M1648.1 285.9V291.5" stroke="#5b5b5b" stroke-width="5.800" stroke-linecap="round"/><path d="M1659.9 272.600V272.8M1659.9 290.6V299.500" stroke="#0a9be2" stroke-width="4.200" stroke-linecap="round"/><path d="M1659.9 278.9V284.5" stroke="#5b5b5b" stroke-width="5.800" stroke-linecap="round"/></svg>
<div class="abs" style="left:1621.2px;top:258px;width:267.8px;height:59.8px;border:7.1px solid #cfaee5;border-radius:24px"></div>
</body></html>
